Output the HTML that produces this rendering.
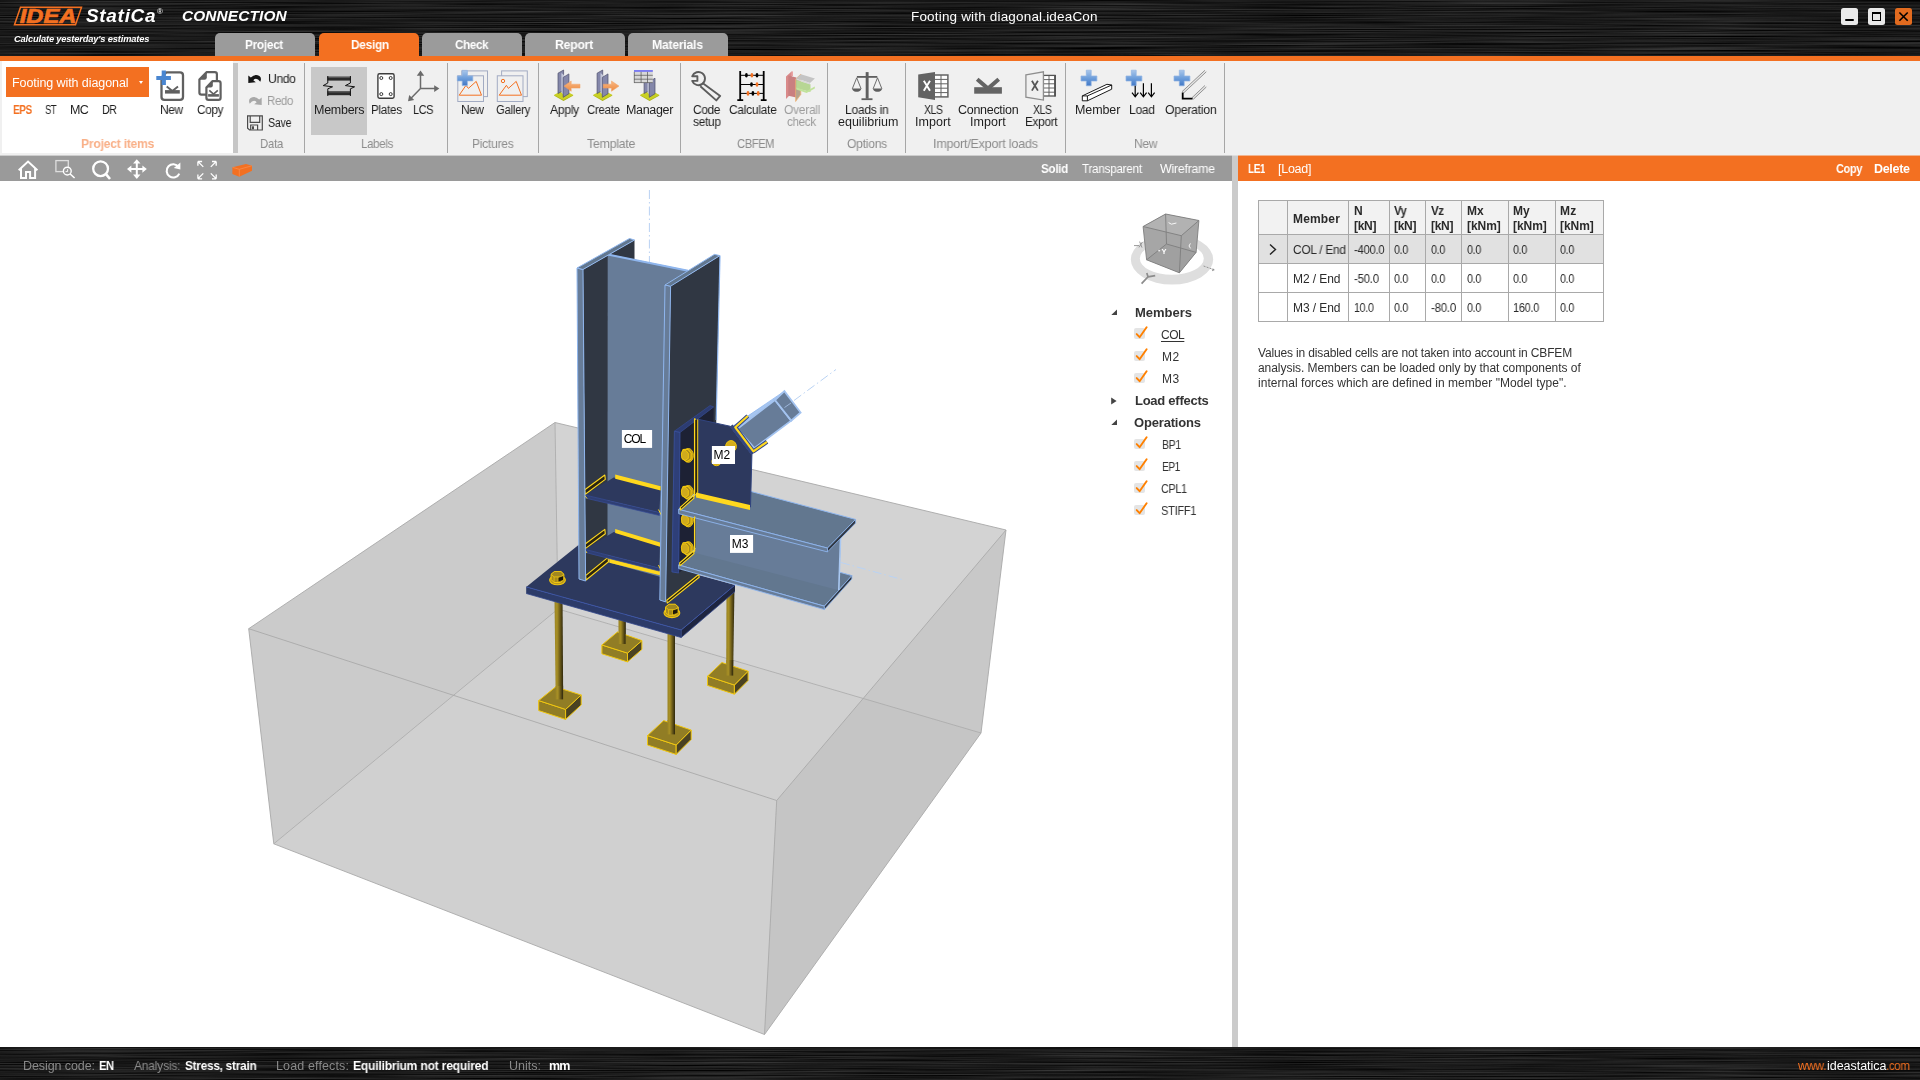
<!DOCTYPE html>
<html lang="en"><head><meta charset="utf-8"><title>IDEA StatiCa Connection</title>
<style>
*{margin:0;padding:0;box-sizing:border-box}
html,body{width:1920px;height:1080px;overflow:hidden;background:#fff}
body{font-family:"Liberation Sans",sans-serif;font-size:12px;color:#1e1e1e;position:relative}
.t{position:absolute;white-space:nowrap;display:block;transform-origin:0 0;will-change:transform}
.abs{position:absolute}
#hdr{left:0;top:0;width:1920px;height:56px}
#oline{left:0;top:56px;width:1920px;height:5px;background:#f37021}
.tab{position:absolute;top:33px;height:23px;width:100px;background:#9b9b9b;border-radius:5px 5px 0 0}
.tab.on{background:#f37021}
#ribbon{left:0;top:61px;width:1920px;height:95px;background:#f0f0f0}
#pitems{left:2px;top:61px;width:231px;height:92px;background:#fff}
.vsep{position:absolute;top:63px;width:1px;height:90px;background:#a6a6a6}
#tbar{left:0;top:156px;width:1232px;height:25px;background:#9a9a9a}
#split{left:1232px;top:156px;width:6px;height:891px;background:#cbcbcb}
#rtitle{left:1238px;top:156px;width:682px;height:25px;background:#f37021}
#ftr{left:0;top:1047px;width:1920px;height:33px}
.wb{position:absolute;top:8px;width:17px;height:17px;background:#e9e9e9;border-radius:2.5px}
</style></head>
<body>
<div id="hdr" class="abs" style="background:#141414"></div>
<svg class="abs" style="left:0;top:0" width="1920" height="56"><defs><filter id="bm" x="0" y="0" width="100%" height="100%" color-interpolation-filters="sRGB"><feTurbulence type="fractalNoise" baseFrequency="0.005 0.85" numOctaves="3" seed="7" result="n"/><feColorMatrix type="matrix" values="0.3 0 0 0 -0.045  0.3 0 0 0 -0.045  0.3 0 0 0 -0.045  0 0 0 0 1"/></filter></defs><rect width="1920" height="56" filter="url(#bm)"/></svg>
<svg class="abs" style="left:10px;top:4px" width="80" height="24" viewBox="10 4 80 24">
<path d="M20.5 7.2 L81.5 7.2 L75.5 24.8 L14.5 24.8 Z" fill="none" stroke="#f37021" stroke-width="1.5"/>
<text x="19.8" y="23.2" font-family="Liberation Sans, sans-serif" font-size="20.2" font-weight="700" font-style="italic" fill="#f37021" stroke="#f37021" stroke-width="0.7" textLength="56.5" lengthAdjust="spacingAndGlyphs">IDEA</text>
</svg>
<span class="t" style="left:85.50px;top:5.00px;font-size:19px;line-height:21px;letter-spacing:0.684px;font-weight:700;font-style:italic;color:#fff;">StatiCa</span>
<span class="t" style="left:157.00px;top:7.00px;font-size:8px;line-height:9px;color:#fff;">®</span>
<span class="t" style="left:182.00px;top:7.00px;font-size:15.4px;line-height:17px;letter-spacing:0.128px;font-weight:700;font-style:italic;color:#fff;">CONNECTION</span>
<span class="t" style="left:13.80px;top:34.00px;font-size:9.3px;line-height:10px;letter-spacing:-0.161px;font-weight:700;font-style:italic;color:#fff;">Calculate yesterday&#x27;s estimates</span>
<span class="t" style="left:910.50px;top:9.00px;font-size:13.5px;line-height:15px;letter-spacing:0.174px;color:#fff;">Footing with diagonal.ideaCon</span>
<div class="wb" style="left:1841px"><div class="abs" style="left:4.3px;top:11.2px;width:8.5px;height:1.7px;background:#000;border-radius:1px"></div></div>
<div class="wb" style="left:1868px"><div class="abs" style="left:4px;top:4.3px;width:9px;height:8.6px;border:1px solid #000;border-top-width:2px"></div></div>
<div class="wb" style="left:1895px;background:#e26b1f"><svg class="abs" style="left:0;top:0" width="17" height="17"><path d="M4.4 4.5 L12.7 12.8 M12.7 4.5 L4.4 12.8" stroke="#000" stroke-width="1.6"/></svg></div>
<div class="tab" style="left:215px"></div>
<span class="t" style="left:245.00px;top:38.00px;font-size:12.6px;line-height:14px;letter-spacing:-0.272px;transform:scaleX(0.9315);font-weight:700;color:#fff;">Project</span>
<div class="tab on" style="left:319px"></div>
<span class="t" style="left:350.50px;top:38.00px;font-size:12.6px;line-height:14px;letter-spacing:-0.306px;transform:scaleX(0.9431);font-weight:700;color:#fff;">Design</span>
<div class="tab" style="left:422px"></div>
<span class="t" style="left:454.50px;top:38.00px;font-size:12.6px;line-height:14px;letter-spacing:-0.367px;transform:scaleX(0.9243);font-weight:700;color:#fff;">Check</span>
<div class="tab" style="left:525px"></div>
<span class="t" style="left:555.00px;top:38.00px;font-size:12.6px;line-height:14px;letter-spacing:-0.296px;transform:scaleX(0.9774);font-weight:700;color:#fff;">Report</span>
<div class="tab" style="left:628px"></div>
<span class="t" style="left:652.00px;top:38.00px;font-size:12.6px;line-height:14px;letter-spacing:-0.246px;transform:scaleX(0.9691);font-weight:700;color:#fff;">Materials</span>
<div id="oline" class="abs"></div>
<div id="ribbon" class="abs"></div>
<div id="pitems" class="abs"></div>
<div class="abs" style="left:233px;top:63px;width:5px;height:90px;background:#c6c6c6"></div>
<div class="abs" style="left:6px;top:67px;width:143px;height:30px;background:#f37021"></div>
<span class="t" style="left:12.00px;top:76.00px;font-size:12.5px;line-height:14px;letter-spacing:-0.078px;color:#fff;">Footing with diagonal</span>
<div class="abs" style="left:139px;top:81px;width:0;height:0;border-left:2.5px solid transparent;border-right:2.5px solid transparent;border-top:3px solid #fff"></div>
<span class="t" style="left:12.50px;top:103.00px;font-size:12.5px;line-height:14px;letter-spacing:-0.536px;transform:scaleX(0.8050);font-weight:700;color:#f37021;">EPS</span>
<span class="t" style="left:45.00px;top:103.00px;font-size:12.5px;line-height:14px;letter-spacing:-0.743px;transform:scaleX(0.7695);color:#1e1e1e;">ST</span>
<span class="t" style="left:69.80px;top:103.00px;font-size:12.5px;line-height:14px;letter-spacing:-0.713px;color:#1e1e1e;">MC</span>
<span class="t" style="left:101.64px;top:103.00px;font-size:12.5px;line-height:14px;letter-spacing:-0.695px;transform:scaleX(0.8572);color:#1e1e1e;">DR</span>
<span class="t" style="left:159.54px;top:103.00px;font-size:12.5px;line-height:14px;letter-spacing:-0.454px;transform:scaleX(0.9638);color:#1e1e1e;">New</span>
<span class="t" style="left:196.80px;top:103.00px;font-size:12.5px;line-height:14px;letter-spacing:-0.370px;transform:scaleX(0.9438);color:#1e1e1e;">Copy</span>
<span class="t" style="left:80.50px;top:136.00px;font-size:13px;line-height:15px;letter-spacing:-0.254px;transform:scaleX(0.9341);font-weight:700;color:#f9b088;">Project items</span>
<span class="t" style="left:267.50px;top:72.00px;font-size:12.5px;line-height:14px;letter-spacing:-0.360px;transform:scaleX(0.9705);color:#1e1e1e;">Undo</span>
<span class="t" style="left:266.58px;top:94.00px;font-size:12.5px;line-height:14px;letter-spacing:-0.368px;transform:scaleX(0.9164);color:#9c9c9c;">Redo</span>
<span class="t" style="left:267.50px;top:116.00px;font-size:12.5px;line-height:14px;letter-spacing:-0.388px;transform:scaleX(0.8584);color:#1e1e1e;">Save</span>
<span class="t" style="left:259.62px;top:136.00px;font-size:13px;line-height:15px;letter-spacing:-0.361px;transform:scaleX(0.8797);color:#8c8c8c;">Data</span>
<div class="abs" style="left:311px;top:67px;width:56px;height:68px;background:#c8c8c8"></div>
<span class="t" style="left:313.50px;top:103.00px;font-size:12.5px;line-height:14px;letter-spacing:-0.274px;color:#1e1e1e;">Members</span>
<span class="t" style="left:370.87px;top:103.00px;font-size:12.5px;line-height:14px;letter-spacing:-0.253px;transform:scaleX(0.9278);color:#1e1e1e;">Plates</span>
<span class="t" style="left:413.42px;top:103.00px;font-size:12.5px;line-height:14px;letter-spacing:-0.457px;transform:scaleX(0.8792);color:#1e1e1e;">LCS</span>
<span class="t" style="left:360.92px;top:136.00px;font-size:13px;line-height:15px;letter-spacing:-0.301px;transform:scaleX(0.8787);color:#8c8c8c;">Labels</span>
<span class="t" style="left:461.04px;top:103.00px;font-size:12.5px;line-height:14px;letter-spacing:-0.457px;transform:scaleX(0.9558);color:#1e1e1e;">New</span>
<span class="t" style="left:495.50px;top:103.00px;font-size:12.5px;line-height:14px;letter-spacing:-0.261px;transform:scaleX(0.9025);color:#1e1e1e;">Gallery</span>
<span class="t" style="left:472.38px;top:136.00px;font-size:13px;line-height:15px;letter-spacing:-0.252px;transform:scaleX(0.9218);color:#8c8c8c;">Pictures</span>
<span class="t" style="left:549.50px;top:103.00px;font-size:12.5px;line-height:14px;letter-spacing:-0.288px;transform:scaleX(0.9720);color:#1e1e1e;">Apply</span>
<span class="t" style="left:587.00px;top:103.00px;font-size:12.5px;line-height:14px;letter-spacing:-0.288px;transform:scaleX(0.9134);color:#1e1e1e;">Create</span>
<span class="t" style="left:625.80px;top:103.00px;font-size:12.5px;line-height:14px;letter-spacing:-0.329px;color:#1e1e1e;">Manager</span>
<span class="t" style="left:586.80px;top:136.00px;font-size:13px;line-height:15px;letter-spacing:-0.276px;transform:scaleX(0.9528);color:#8c8c8c;">Template</span>
<span class="t" style="left:692.50px;top:103.00px;font-size:12.5px;line-height:14px;letter-spacing:-0.366px;transform:scaleX(0.9538);color:#1e1e1e;">Code</span>
<span class="t" style="left:692.50px;top:115.00px;font-size:12.5px;line-height:14px;letter-spacing:-0.282px;transform:scaleX(0.9492);color:#1e1e1e;">setup</span>
<span class="t" style="left:728.80px;top:103.00px;font-size:12.5px;line-height:14px;letter-spacing:-0.239px;transform:scaleX(0.9533);color:#1e1e1e;">Calculate</span>
<span class="t" style="left:783.80px;top:103.00px;font-size:12.5px;line-height:14px;letter-spacing:-0.237px;transform:scaleX(0.9547);color:#9c9c9c;">Overall</span>
<span class="t" style="left:787.00px;top:115.00px;font-size:12.5px;line-height:14px;letter-spacing:-0.316px;transform:scaleX(0.9241);color:#9c9c9c;">check</span>
<span class="t" style="left:736.80px;top:136.00px;font-size:13px;line-height:15px;letter-spacing:-0.454px;transform:scaleX(0.8610);color:#8c8c8c;">CBFEM</span>
<span class="t" style="left:845.34px;top:103.00px;font-size:12.5px;line-height:14px;letter-spacing:-0.241px;transform:scaleX(0.9614);color:#1e1e1e;">Loads in</span>
<span class="t" style="left:837.50px;top:115.00px;font-size:12.5px;line-height:14px;color:#1e1e1e;">equilibrium</span>
<span class="t" style="left:846.80px;top:136.00px;font-size:13px;line-height:15px;letter-spacing:-0.283px;transform:scaleX(0.9334);color:#8c8c8c;">Options</span>
<span class="t" style="left:924.30px;top:103.00px;font-size:12.5px;line-height:14px;letter-spacing:-0.486px;transform:scaleX(0.8379);color:#1e1e1e;">XLS</span>
<span class="t" style="left:914.50px;top:115.00px;font-size:12.5px;line-height:14px;letter-spacing:0.050px;color:#1e1e1e;">Import</span>
<span class="t" style="left:957.50px;top:103.00px;font-size:12.5px;line-height:14px;letter-spacing:-0.287px;color:#1e1e1e;">Connection</span>
<span class="t" style="left:969.50px;top:115.00px;font-size:12.5px;line-height:14px;letter-spacing:0.050px;color:#1e1e1e;">Import</span>
<span class="t" style="left:1032.50px;top:103.00px;font-size:12.5px;line-height:14px;letter-spacing:-0.486px;transform:scaleX(0.8379);color:#1e1e1e;">XLS</span>
<span class="t" style="left:1024.86px;top:115.00px;font-size:12.5px;line-height:14px;letter-spacing:-0.266px;transform:scaleX(0.9381);color:#1e1e1e;">Export</span>
<span class="t" style="left:933.33px;top:136.00px;font-size:13px;line-height:15px;letter-spacing:-0.226px;transform:scaleX(0.9654);color:#8c8c8c;">Import/Export loads</span>
<span class="t" style="left:1074.80px;top:103.00px;font-size:12.5px;line-height:14px;letter-spacing:-0.096px;color:#1e1e1e;">Member</span>
<span class="t" style="left:1128.53px;top:103.00px;font-size:12.5px;line-height:14px;letter-spacing:-0.324px;transform:scaleX(0.9659);color:#1e1e1e;">Load</span>
<span class="t" style="left:1164.50px;top:103.00px;font-size:12.5px;line-height:14px;letter-spacing:-0.246px;transform:scaleX(0.9760);color:#1e1e1e;">Operation</span>
<span class="t" style="left:1133.57px;top:136.00px;font-size:13px;line-height:15px;letter-spacing:-0.481px;transform:scaleX(0.9328);color:#8c8c8c;">New</span>
<div class="vsep" style="left:304px"></div>
<div class="vsep" style="left:447px"></div>
<div class="vsep" style="left:538px"></div>
<div class="vsep" style="left:680px"></div>
<div class="vsep" style="left:827px"></div>
<div class="vsep" style="left:905px"></div>
<div class="vsep" style="left:1065px"></div>
<div class="vsep" style="left:1224px"></div>
<svg class="abs" style="left:0;top:61px" width="1232" height="95" viewBox="0 61 1232 95">
<defs><linearGradient id="plg" x1="0" x2="0" y1="0" y2="1"><stop offset="0" stop-color="#a9c6ea"/><stop offset="0.5" stop-color="#6f9fdb"/><stop offset="1" stop-color="#4178c6"/></linearGradient><linearGradient id="arg" x1="0" x2="0" y1="0" y2="1"><stop offset="0" stop-color="#f8b884"/><stop offset="1" stop-color="#ee8a40"/></linearGradient><pattern id="hat" width="1.4" height="1.4" patternUnits="userSpaceOnUse"><rect width="1.4" height="1.4" fill="#f0f0f0"/><rect width="0.8" height="0.8" fill="#707070"/></pattern></defs>
<path d="M166.5 72.3 H180 Q183 72.3 183 75.3 V97 Q183 99.9 180 99.9 H164.5 Q161.5 99.9 161.5 97 V77.5 Z" fill="#fff" stroke="#606060" stroke-width="2.3" stroke-linejoin="round"/>
<path d="M165 90.1 H179.8 V93.6 H165 Z" fill="#606060"/><path d="M166.7 86.4 L172.4 91 L178 86.4" fill="none" stroke="#606060" stroke-width="1.9"/>
<path d="M161.7 70.4 H165.9 V76.1 H170.9 V79.9 H165.9 V85.0 H161.7 V79.9 H156.3 V76.1 H161.7 Z" fill="#4a86d0"/>
<path d="M206.5 72.2 H214.8 Q216.9 72.2 216.9 74.3 V92.6 Q216.9 94.7 214.8 94.7 H201.5 Q199.4 94.7 199.4 92.6 V79.5 Z" fill="#fff" stroke="#606060" stroke-width="2.2" stroke-linejoin="round"/>
<path d="M206.8 72 V77.5 Q206.8 79.7 204.5 79.7 H199.2 Z" fill="#606060"/>
<path d="M212.6 81.1 H218.5 Q220.6 81.1 220.6 83.2 V97.7 Q220.6 99.8 218.5 99.8 H208.5 Q206.4 99.8 206.4 97.7 V87.5 Z" fill="#fff" stroke="#606060" stroke-width="2.2" stroke-linejoin="round"/>
<path d="M212.8 80.9 V85.6 Q212.8 87.6 210.8 87.6 H206.2 Z" fill="#606060"/>
<path d="M208.1 94.1 H218.9 V96.7 H208.1 Z" fill="#606060"/><path d="M209.3 90.4 L213.5 94.2 L217.8 90.4" fill="none" stroke="#606060" stroke-width="1.6"/>
<path d="M248.3 75.6 L248.3 83 L255.8 82.2 L253.3 80.2 Q256.5 76.8 260.3 81.8 Q262 78 259.4 76 Q255 73.2 250.8 77.6 Z" fill="#151515"/>
<path d="M261.7 97.6 L261.7 105 L254.2 104.2 L256.7 102.2 Q253.5 98.8 249.7 103.8 Q248 100 250.6 98 Q255 95.2 259.2 99.6 Z" fill="#a8a8a8"/>
<path d="M247.6 115.8 H262.3 V130 H249.6 L247.6 128.2 Z" fill="none" stroke="#4a4a4a" stroke-width="1.2"/><path d="M250.2 116 V122.3 H259.7 V116" fill="none" stroke="#4a4a4a" stroke-width="1.2"/><path d="M250.7 130 V125 H257.6 V130" fill="none" stroke="#4a4a4a" stroke-width="1.2"/><rect x="252" y="126.3" width="2" height="3" fill="#4a4a4a"/>
<rect x="327.4" y="76.7" width="23.3" height="3.9" fill="#2b2b2b"/><rect x="327.4" y="76.7" width="23.3" height="1.2" fill="#5a5a5a"/>
<rect x="327.4" y="91.3" width="23.3" height="3.9" fill="#2b2b2b"/><rect x="327.4" y="91.3" width="23.3" height="1.2" fill="#5a5a5a"/>
<path d="M327.8 76 V83 L323.2 85.6 L332.6 86.8 L327.8 88.8 V96" fill="none" stroke="#111" stroke-width="1"/>
<path d="M350.4 76 V83 L345.4 85.6 L354.6 86.8 L350.4 88.8 V96" fill="none" stroke="#111" stroke-width="1"/>
<rect x="377.9" y="73.8" width="16.2" height="24.4" rx="1.6" fill="#fff" stroke="#3c3c3c" stroke-width="1.4"/>
<circle cx="381.3" cy="78.0" r="1.5" fill="none" stroke="#222" stroke-width="0.9"/>
<circle cx="390.7" cy="78.0" r="1.5" fill="none" stroke="#222" stroke-width="0.9"/>
<circle cx="381.3" cy="94.1" r="1.5" fill="none" stroke="#222" stroke-width="0.9"/>
<circle cx="390.7" cy="94.1" r="1.5" fill="none" stroke="#222" stroke-width="0.9"/>
<path d="M420.5 74 V88.6 H435 M420.5 88.6 L411 98.3" fill="none" stroke="#6a6a6a" stroke-width="1.5"/>
<polygon points="420.5,70.5 424.2,75.8 416.8,75.8" fill="#6a6a6a"/><polygon points="439.4,88.6 434.2,92 434.2,85.2" fill="#6a6a6a"/><polygon points="408,101.3 409.2,95.1 414.2,99.9" fill="#6a6a6a"/>
<rect x="461.8" y="70.9" width="25.7" height="25.7" fill="#f0f0f0" stroke="#a2abc2" stroke-width="1"/>
<rect x="457.8" y="75.8" width="25.7" height="25.7" fill="#f0f0f0" stroke="#a2abc2" stroke-width="1"/>
<polygon points="459.2,95.2 466.0,85.3 468.4,88.4 476.2,81.4 481.5,95.2" fill="none" stroke="#f37021" stroke-width="1"/>
<rect x="501.6" y="70.9" width="25.7" height="25.7" fill="#f0f0f0" stroke="#a2abc2" stroke-width="1"/>
<rect x="497.3" y="75.8" width="25.7" height="25.7" fill="#f0f0f0" stroke="#a2abc2" stroke-width="1"/>
<polygon points="499.2,95.2 506.4,85.3 508.4,88.4 516.2,81.4 521.5,95.2" fill="none" stroke="#f37021" stroke-width="1"/>
<circle cx="503" cy="81" r="1.7" fill="none" stroke="#f37021" stroke-width="1"/>
<path d="M462.2 70.4 H467.4 V75.9 H472.8 V80.9 H467.4 V85.6 H462.2 V80.9 H457.3 V75.9 H462.2 Z" fill="url(#plg)" stroke="#8fb3e3" stroke-width="0.7"/>
<polygon points="553.9,95.5 563.5,90.2 573.4,95.5 563.5,101.0" fill="#a9b218"/><polygon points="553.9,94.9 563.5,89.8 573.4,94.9 563.5,100.0" fill="#c9d024"/><polygon points="558.0,73.2 563.6,70.0 563.6,90.3 558.0,93.5" fill="#8487aa" stroke="#4c4e6c" stroke-width="0.7"/><polygon points="561.4,73.0 564.4,75.5 564.4,96.3 561.4,92.3" fill="#c4c8da"/><polygon points="563.2,77.4 568.9,73.9 568.9,93.7 563.2,97.3" fill="#8487aa" stroke="#4c4e6c" stroke-width="0.7"/>
<polygon points="564,86.1 571.2,81 571.2,84.2 580,84.2 580,88.1 571.2,88.1 571.2,91.3" fill="url(#arg)" stroke="#f0a060" stroke-width="0.5"/>
<polygon points="593.0,95.5 602.6,90.2 612.5,95.5 602.6,101.0" fill="#a9b218"/><polygon points="593.0,94.9 602.6,89.8 612.5,94.9 602.6,100.0" fill="#c9d024"/><polygon points="597.1,73.2 602.7,70.0 602.7,90.3 597.1,93.5" fill="#8487aa" stroke="#4c4e6c" stroke-width="0.7"/><polygon points="600.5,73.0 603.5,75.5 603.5,96.3 600.5,92.3" fill="#c4c8da"/><polygon points="602.3,77.4 608.0,73.9 608.0,93.7 602.3,97.3" fill="#8487aa" stroke="#4c4e6c" stroke-width="0.7"/>
<polygon points="619,86.1 611.5,81 611.5,84.2 603.3,84.2 603.3,88.1 611.5,88.1 611.5,91.3" fill="url(#arg)" stroke="#f0a060" stroke-width="0.5"/>
<polygon points="640.0,95.5 649.6,90.2 659.5,95.5 649.6,101.0" fill="#a9b218"/><polygon points="640.0,94.9 649.6,89.8 659.5,94.9 649.6,100.0" fill="#c9d024"/><polygon points="644.1,77.5 649.7,74.3 649.7,90.3 644.1,93.5" fill="#8487aa" stroke="#4c4e6c" stroke-width="0.7"/><polygon points="647.5,77.3 650.5,79.8 650.5,96.3 647.5,92.3" fill="#c4c8da"/><polygon points="649.3,81.7 655.0,78.2 655.0,93.7 649.3,97.3" fill="#8487aa" stroke="#4c4e6c" stroke-width="0.7"/>
<rect x="634" y="70" width="18.8" height="12.8" fill="#d8d8d8"/><rect x="634" y="70" width="18.8" height="1.9" fill="#7c7cf2"/>
<path d="M634 75.3 H652.8 M634 79.2 H652.8 M641.1 71.9 V82.8 M647.5 71.9 V82.8 M634.3 71.9 V82.8 M634 82.6 H652.8" stroke="#555" stroke-width="0.7" fill="none"/>
<g fill="none" stroke="#5c5c5c" stroke-width="1.9" stroke-linejoin="round"><path d="M692.2 76.3 A6.6 6.6 0 1 1 692.2 80.9 H697.4 V76.3 Z" fill="#f0f0f0"/><path d="M703.2 83.4 L720.2 95.9 L716.3 100.4 L700.3 86.3"/></g>
<path d="M740.2 71.1 V100 M763.7 71.1 V100 M737.3 100.2 H743.2 M760.8 100.2 H766.6" stroke="#000" stroke-width="1.8" fill="none"/><path d="M740.2 75.3 H763.7 M740.2 84.5 H763.7 M740.2 93.4 H763.7" stroke="#000" stroke-width="1" fill="none"/>
<ellipse cx="746.4" cy="75.3" rx="1.4" ry="2.3" fill="#000"/>
<ellipse cx="751.9" cy="75.3" rx="1.4" ry="2.3" fill="#f37021"/>
<ellipse cx="757.0" cy="75.3" rx="1.4" ry="2.3" fill="#000"/>
<ellipse cx="751.5" cy="84.5" rx="1.4" ry="2.3" fill="#000"/>
<ellipse cx="757.0" cy="84.5" rx="1.4" ry="2.3" fill="#f37021"/>
<ellipse cx="748.0" cy="93.4" rx="1.4" ry="2.3" fill="#f37021"/>
<ellipse cx="752.9" cy="93.4" rx="1.4" ry="2.3" fill="#000"/>
<ellipse cx="758.2" cy="93.4" rx="1.4" ry="2.3" fill="#f37021"/>
<polygon points="786,76.6 791.8,71.2 791.8,93 786,99" fill="#d98a8a"/><polygon points="788.3,75.5 796.3,77.5 796.3,97.5 788.3,95.8" fill="#c97f80"/><polygon points="791.8,71.2 792.8,71.5 792.8,76 791.8,76" fill="#e89090"/>
<polygon points="795.6,79 800.8,74.2 800.8,94.5 795.6,101.5" fill="#b5a58f" stroke="#f0b070" stroke-width="0.7"/>
<polygon points="796.3,80 810.5,84.2 810.5,92 804,90.3 796.3,88.6" fill="#b7d694"/><polygon points="796.3,87.4 806.6,91 814.8,86.6 814.8,88.6 806.6,93 796.3,89.6" fill="#c1e39b"/>
<polygon points="796.3,78.2 800.9,74.2 814.9,78.4 810,83.1" fill="#c4c4c4"/><polygon points="796.3,78.2 810,83.1 810,84.4 796.3,79.8" fill="#d8d8d8"/>
<rect x="865.7" y="72.1" width="2.9" height="26.6" fill="#5f5f5f"/><rect x="856.9" y="76" width="20.4" height="1.8" fill="#5f5f5f"/><rect x="861.5" y="98.3" width="11" height="1.8" fill="#5f5f5f"/>
<path d="M852.3 88.8 L856.7 77.8 L861.1 88.8" fill="none" stroke="#5f5f5f" stroke-width="0.9"/><path d="M852.1 88.6 H861.3 Q860.5 92.2 856.7 91.7 Q852.9 92.2 852.1 88.6 Z" fill="#5f5f5f"/>
<path d="M873.1 88.8 L877.5 77.8 L881.9 88.8" fill="none" stroke="#5f5f5f" stroke-width="0.9"/><path d="M872.9 88.6 H882.1 Q881.3 92.2 877.5 91.7 Q873.7 92.2 872.9 88.6 Z" fill="#5f5f5f"/>
<rect x="934" y="75" width="13.9" height="21.9" fill="#fff" stroke="#636363" stroke-width="1.5"/>
<path d="M934 79.4 H947.9 M934 83.8 H947.9 M934 88.2 H947.9 M934 92.6 H947.9 M941 75 V96.9" stroke="#636363" stroke-width="1" fill="none"/>
<polygon points="918.2,74.6 935,71.9 935,100 918.2,97.3" fill="#636363"/>
<path d="M923.8 80.8 L930 90.8 M930 80.8 L923.8 90.8" stroke="#fff" stroke-width="1.9" fill="none"/>
<rect x="974.2" y="87.2" width="27.7" height="6.5" fill="#646464"/><path d="M977.2 79.3 L988 88.6 L998.7 79.3" fill="none" stroke="#646464" stroke-width="4"/>
<rect x="1043.4" y="75.4" width="11.6" height="20.6" fill="#fff" stroke="#555" stroke-width="1.3"/><rect x="1054.2" y="75" width="1.8" height="21.4" fill="#555"/>
<path d="M1043 79.6 H1055 M1043 83.8 H1055 M1043 88 H1055 M1043 92.2 H1055 M1049 75.4 V96" stroke="#555" stroke-width="0.9" fill="none"/>
<polygon points="1025.9,74.8 1043.4,71.8 1043.4,100.1 1025.9,97.1" fill="#f0f0f0" stroke="#8e8e8e" stroke-width="1.3"/>
<path d="M1031.9 80.8 L1037.9 90.6 M1037.9 80.8 L1031.9 90.6" stroke="#555" stroke-width="1.8" fill="none"/>
<path d="M1086.3 70.2 H1091.2 V76.0 H1096.9 V81.0 H1091.2 V85.8 H1086.3 V81.0 H1081.0 V76.0 H1086.3 Z" fill="url(#plg)" stroke="#8fb3e3" stroke-width="0.7"/>
<polygon points="1082.3,95.9 1106.9,84.3 1111.7,85 1111.7,89.2 1087.4,100.8 1082.3,100.8" fill="#fff" stroke="#000" stroke-width="0.9" stroke-linejoin="round"/><path d="M1082.3 95.9 H1087.4 V100.8 M1087.4 95.9 L1111.7 85" fill="none" stroke="#000" stroke-width="0.9"/>
<path d="M1131.3 70.2 H1136.2 V76.0 H1141.9 V81.0 H1136.2 V85.8 H1131.3 V81.0 H1126.0 V76.0 H1131.3 Z" fill="url(#plg)" stroke="#8fb3e3" stroke-width="0.7"/>
<path d="M1135.2 85.8 V96.6 M1132.0 92.6 L1135.2 96.8 L1138.4 92.6" fill="none" stroke="#000" stroke-width="1.2"/>
<path d="M1143.4 83.2 V96.6 M1140.2 92.6 L1143.4 96.8 L1146.6 92.6" fill="none" stroke="#000" stroke-width="1.2"/>
<path d="M1151.4 83.2 V96.6 M1148.2 92.6 L1151.4 96.8 L1154.6 92.6" fill="none" stroke="#000" stroke-width="1.2"/>
<path d="M1179.3 70.2 H1184.2 V76.0 H1189.9 V81.0 H1184.2 V85.8 H1179.3 V81.0 H1174.0 V76.0 H1179.3 Z" fill="url(#plg)" stroke="#8fb3e3" stroke-width="0.7"/>
<path d="M1182.7 92.4 L1205.6 71.1" stroke="#e4e4e4" stroke-width="2.4" fill="none"/>
<path d="M1182.0 91.7 L1204.9 70.3 M1183.4 93.2 L1206.3 71.8" stroke="#707070" stroke-width="0.7" fill="none"/>
<path d="M1192.6 98.6 L1205.6 86.3" stroke="#e4e4e4" stroke-width="2.4" fill="none"/>
<path d="M1191.9 97.8 L1204.9 85.5 M1193.3 99.3 L1206.3 87.0" stroke="#707070" stroke-width="0.7" fill="none"/>
<path d="M1182.7 92.6 V98.6 H1192.6" fill="none" stroke="#000" stroke-width="1.8"/>
</svg>
<div id="tbar" class="abs"></div>
<div class="abs" style="left:0;top:155px;width:1232px;height:1px;background:#cdcdcd"></div><div class="abs" style="left:1232px;top:155px;width:6px;height:1px;background:#dedede"></div><div class="abs" style="left:1238px;top:155px;width:682px;height:1px;background:#f2b48f"></div>
<div id="split" class="abs"></div>
<div id="rtitle" class="abs"></div>
<span class="t" style="left:1040.80px;top:162.00px;font-size:12.5px;line-height:14px;letter-spacing:-0.282px;transform:scaleX(0.9274);font-weight:700;color:#fff;">Solid</span>
<span class="t" style="left:1082.00px;top:162.00px;font-size:12.5px;line-height:14px;letter-spacing:-0.253px;transform:scaleX(0.9319);color:#fff;">Transparent</span>
<span class="t" style="left:1160.00px;top:162.00px;font-size:12.5px;line-height:14px;letter-spacing:-0.255px;transform:scaleX(0.9884);color:#fff;">Wireframe</span>
<span class="t" style="left:1248.30px;top:162.00px;font-size:12.5px;line-height:14px;letter-spacing:-0.507px;transform:scaleX(0.7924);font-weight:700;color:#fff;">LE1</span>
<span class="t" style="left:1277.50px;top:162.00px;font-size:12.5px;line-height:14px;letter-spacing:-0.256px;color:#fff;">[Load]</span>
<span class="t" style="left:1836.00px;top:162.00px;font-size:12.5px;line-height:14px;letter-spacing:-0.414px;transform:scaleX(0.8817);font-weight:700;color:#fff;">Copy</span>
<span class="t" style="left:1874.00px;top:162.00px;font-size:12.5px;line-height:14px;letter-spacing:-0.313px;font-weight:700;color:#fff;">Delete</span>
<svg class="abs" style="left:0;top:156px" width="300" height="25" viewBox="0 156 300 25">
<path d="M18.7 170.2 L28.05 161.5 L37.4 170.2 M21 168.8 V178.1 H26 V172 H30.1 V178.1 H35.1 V168.8" fill="none" stroke="#fff" stroke-width="2" stroke-linejoin="miter"/>
<rect x="55.9" y="160.6" width="12.4" height="11" fill="none" stroke="#dedede" stroke-width="1.3"/><circle cx="67.3" cy="171.1" r="3.9" fill="#9a9a9a" stroke="#fff" stroke-width="1.4"/><path d="M70.2 174 L74.6 178" stroke="#fff" stroke-width="1.6"/><path d="M67.6 169.2 V171.6 H65.6" stroke="#fff" stroke-width="0.9" fill="none"/>
<circle cx="100.6" cy="168.7" r="7.4" fill="none" stroke="#fff" stroke-width="2.3"/><path d="M106 174.2 L110 179" stroke="#fff" stroke-width="2.6"/>
<path d="M130 169.1 H144 M136.8 162 V176" stroke="#fff" stroke-width="2" fill="none"/>
<polygon points="127,169.1 131.4,165.4 131.4,172.8" fill="#fff"/><polygon points="146.8,169.1 142.4,165.4 142.4,172.8" fill="#fff"/><polygon points="136.8,159.2 133.1,163.6 140.5,163.6" fill="#fff"/><polygon points="136.8,179 133.1,174.6 140.5,174.6" fill="#fff"/>
<path d="M178.6 167 A6.6 6.6 0 1 0 179.3 173.6" fill="none" stroke="#fff" stroke-width="2.1"/><polygon points="180.4,162.6 180.4,169.6 173.8,168" fill="#fff"/>
<path d="M197.9 161.5 H202.1 M197.9 161.5 V165.7 M198.3 161.9 L203.3 166.9" stroke="#fff" stroke-width="1.3" fill="none"/>
<path d="M216.2 161.5 H212.0 M216.2 161.5 V165.7 M215.8 161.9 L210.8 166.9" stroke="#fff" stroke-width="1.3" fill="none"/>
<path d="M197.9 178.8 H202.1 M197.9 178.8 V174.6 M198.3 178.4 L203.3 173.4" stroke="#fff" stroke-width="1.3" fill="none"/>
<path d="M216.2 178.8 H212.0 M216.2 178.8 V174.6 M215.8 178.4 L210.8 173.4" stroke="#fff" stroke-width="1.3" fill="none"/>
<polygon points="232.4,167.3 246,164 252,165.7 252,170.7 239.3,176.8 232.4,174" fill="#f37021"/><path d="M232.6 167.4 L239.3 169.3 L251.8 165.8 M239.3 169.3 V176.6" stroke="#f68d4e" stroke-width="0.8" fill="none"/>
</svg>
<svg class="abs" style="left:0;top:181px" width="1232" height="866" viewBox="0 181 1232 866">
<defs><linearGradient id="rodg" x1="0" x2="1" y1="0" y2="0"><stop offset="0" stop-color="#9a8423"/><stop offset="0.3" stop-color="#a89026"/><stop offset="0.62" stop-color="#6e5d1a"/><stop offset="1" stop-color="#2e270c"/></linearGradient></defs>
<polygon points="555.0,422.5 558.0,609.0 273.8,843.8 248.7,628.7" fill="rgb(112,112,112)" fill-opacity="0.25"/>
<polygon points="555.0,422.5 1006.0,530.0 981.0,733.0 558.0,609.0" fill="rgb(154,154,154)" fill-opacity="0.25"/>
<polygon points="558.0,609.0 981.0,733.0 764.5,1034.5 273.8,843.8" fill="rgb(138,138,138)" fill-opacity="0.25"/>
<polygon points="555.0,422.5 1006.0,530.0 776.7,800.5 248.7,628.7" fill="rgb(154,154,154)" fill-opacity="0.25"/>
<polygon points="248.7,628.7 776.7,800.5 764.5,1034.5 273.8,843.8" fill="rgb(154,154,154)" fill-opacity="0.25"/>
<polygon points="776.7,800.5 1006.0,530.0 981.0,733.0 764.5,1034.5" fill="rgb(112,112,112)" fill-opacity="0.25"/>
<polyline points="555.0,422.5 558.0,609.0" fill="none" stroke="#a9a9a9" stroke-width="0.8"/>
<polyline points="273.8,843.8 558.0,609.0 981.0,733.0" fill="none" stroke="#a9a9a9" stroke-width="0.8"/>
<polyline points="555.0,422.5 1006.0,530.0 776.7,800.5 248.7,628.7 555.0,422.5" fill="none" stroke="#a9a9a9" stroke-width="0.9"/>
<polyline points="248.7,628.7 273.8,843.8 764.5,1034.5 981.0,733.0 1006.0,530.0" fill="none" stroke="#a9a9a9" stroke-width="0.9"/>
<polyline points="776.7,800.5 764.5,1034.5" fill="none" stroke="#a9a9a9" stroke-width="0.9"/>
<polyline points="649.4,190.0 649.4,262.0" fill="none" stroke="#b9d2f3" stroke-width="1" stroke-dasharray="9 3 1.5 3"/>
<polyline points="794.0,400.5 836.0,369.5" fill="none" stroke="#b9d2f3" stroke-width="1" stroke-dasharray="9 3 1.5 3"/>
<polyline points="841.0,562.5 902.0,579.5" fill="none" stroke="#b9d2f3" stroke-width="1" stroke-dasharray="9 3 1.5 3"/>
<polygon points="618.7,600.0 625.6,600.0 625.6,644.0 618.7,644.0" fill="url(#rodg)"/>
<polygon points="601.9,645.0 627.5,653.1 627.5,661.9 601.9,653.8" fill="#917d25" stroke="#f0c60f" stroke-width="1"/>
<polygon points="627.5,653.1 641.9,640.6 641.9,649.4 627.5,661.9" fill="#4a4222" stroke="#f0c60f" stroke-width="1"/>
<polygon points="601.9,645.0 617.5,631.9 641.9,640.6 627.5,653.1" fill="#917d25" stroke="#f0c60f" stroke-width="1"/>
<polygon points="618.7,620.0 625.6,620.0 625.6,644.0 618.7,644.0" fill="url(#rodg)"/>
<polygon points="726.5,585.0 734.5,585.0 733.1,675.6 726.2,675.6" fill="url(#rodg)"/>
<polygon points="707.5,676.2 734.4,685.0 734.4,694.2 707.5,685.4" fill="#917d25" stroke="#f0c60f" stroke-width="1"/>
<polygon points="734.4,685.0 748.1,671.2 748.1,680.4 734.4,694.2" fill="#4a4222" stroke="#f0c60f" stroke-width="1"/>
<polygon points="707.5,676.2 721.9,662.5 748.1,671.2 734.4,685.0" fill="#917d25" stroke="#f0c60f" stroke-width="1"/>
<polygon points="726.3,660.0 733.2,660.0 733.2,675.6 726.3,675.6" fill="url(#rodg)"/>
<polygon points="554.4,592.0 562.5,592.0 563.2,699.4 555.7,699.4" fill="url(#rodg)"/>
<polygon points="538.7,700.6 565.6,709.4 565.6,719.4 538.7,710.6" fill="#917d25" stroke="#f0c60f" stroke-width="1"/>
<polygon points="565.6,709.4 581.2,695.0 581.2,705.0 565.6,719.4" fill="#4a4222" stroke="#f0c60f" stroke-width="1"/>
<polygon points="538.7,700.6 555.6,686.9 581.2,695.0 565.6,709.4" fill="#917d25" stroke="#f0c60f" stroke-width="1"/>
<polygon points="555.6,686.0 563.1,686.0 563.1,699.4 555.6,699.4" fill="url(#rodg)"/>
<polygon points="667.5,632.0 675.0,632.0 675.0,734.4 667.5,734.4" fill="url(#rodg)"/>
<polygon points="647.5,735.6 676.2,745.0 676.2,754.4 647.5,745.0" fill="#917d25" stroke="#f0c60f" stroke-width="1"/>
<polygon points="676.2,745.0 691.2,730.0 691.2,739.4 676.2,754.4" fill="#4a4222" stroke="#f0c60f" stroke-width="1"/>
<polygon points="647.5,735.6 663.7,720.6 691.2,730.0 676.2,745.0" fill="#917d25" stroke="#f0c60f" stroke-width="1"/>
<polygon points="667.5,720.0 675.0,720.0 675.0,734.4 667.5,734.4" fill="url(#rodg)"/>
<polygon points="526.2,586.9 681.2,630.0 681.2,637.5 526.2,593.5" fill="#2c3b69"/>
<polygon points="681.2,630.0 735.0,585.0 735.0,591.5 681.2,637.5" fill="#1e2540"/>
<polygon points="526.2,586.9 581.0,543.0 735.0,585.0 681.2,630.0" fill="#2d395e"/>
<polyline points="526.2,586.9 681.2,630.0 735.0,585.0" fill="none" stroke="#3a53a4" stroke-width="1"/>
<polyline points="526.2,593.5 681.2,637.5 735.0,591.5" fill="none" stroke="#33488c" stroke-width="0.8"/>
<polyline points="681.2,630.0 681.2,637.5" fill="none" stroke="#33488c" stroke-width="0.8"/>
<ellipse cx="557.5" cy="580.1" rx="7.9" ry="4.7" fill="#b8971c" stroke="#f0c60f" stroke-width="1.1"/>
<polygon points="551.1,574.3 554.5,571.5 560.9,571.5 563.9,574.3 563.9,579.5 560.5,582.5 554.1,582.5 551.1,579.5" fill="#a68b1e" stroke="#f0c60f" stroke-width="1"/>
<polygon points="551.1,574.3 554.5,571.5 560.9,571.5 563.9,574.3 560.5,576.9 554.1,576.9" fill="#a08720" stroke="#f0c60f" stroke-width="0.8"/>
<polyline points="554.1,576.9 554.1,582.5" fill="none" stroke="#f0c60f" stroke-width="0.7"/>
<polyline points="558.1,577.0 558.1,582.5" fill="none" stroke="#f0c60f" stroke-width="0.7"/>
<polygon points="558.5,577.7 563.1,576.3 563.1,580.1 558.5,581.5" fill="#1d190a"/>
<polygon points="583.0,269.5 634.5,240.0 634.5,300.0 608.0,300.0 608.6,561.0 585.6,581.0" fill="#303743"/>
<polygon points="607.7,254.0 689.0,270.4 689.0,585.0 607.5,562.0" fill="#677c98"/>
<polyline points="607.7,254.5 688.0,270.8" fill="none" stroke="#8fb6ee" stroke-width="2"/>
<polygon points="609.4,557.8 660.0,570.3 660.0,575.3 609.4,562.8" fill="#ffd81e"/>
<polygon points="585.6,575.6 608.0,557.4 608.5,561.8 586.1,580.0" fill="#2a2410" stroke="#ffd81e" stroke-width="1.1" stroke-linejoin="round"/>
<polygon points="585.0,495.0 613.7,477.5 660.6,487.5 659.4,512.5" fill="#2d395e"/>
<polygon points="585.0,495.0 659.4,512.5 659.4,515.5 585.0,498.0" fill="#2f3f74" stroke="#364c96" stroke-width="0.7"/>
<polygon points="615.2,474.5 660.6,486.3 660.6,490.5 615.2,478.7" fill="#ffd81e"/>
<polygon points="584.8,489.8 604.8,475.0 605.3,479.4 585.3,494.2" fill="#2a2410" stroke="#ffd81e" stroke-width="1.1" stroke-linejoin="round"/>
<polyline points="583.5,494.0 587.0,498.5" fill="none" stroke="#ffd81e" stroke-width="1"/>
<polyline points="658.4,509.5 661.9,516.0" fill="none" stroke="#ffd81e" stroke-width="1"/>
<polygon points="585.0,549.4 613.7,531.9 660.0,543.7 659.4,568.1" fill="#2d395e"/>
<polygon points="585.0,549.4 659.4,568.1 659.4,571.1 585.0,552.4" fill="#2f3f74" stroke="#364c96" stroke-width="0.7"/>
<polygon points="615.2,528.9 660.0,542.5 660.0,546.7 615.2,533.1" fill="#ffd81e"/>
<polygon points="584.8,544.2 604.8,529.4 605.3,533.8 585.3,548.6" fill="#2a2410" stroke="#ffd81e" stroke-width="1.1" stroke-linejoin="round"/>
<polyline points="583.5,548.4 587.0,552.9" fill="none" stroke="#ffd81e" stroke-width="1"/>
<polyline points="658.4,565.1 661.9,571.6" fill="none" stroke="#ffd81e" stroke-width="1"/>
<polygon points="577.0,268.0 583.0,269.5 585.6,581.0 579.0,579.0" fill="#677c98" stroke="#8fb6ee" stroke-width="1"/>
<polygon points="577.0,268.0 629.5,238.5 634.5,240.0 583.0,269.5" fill="#62778f" stroke="#8fb6ee" stroke-width="1"/>
<polygon points="670.6,286.2 720.0,255.6 713.0,563.5 665.6,601.9" fill="#303743"/>
<polyline points="720.0,255.6 716.2,420.0" fill="none" stroke="#8fb6ee" stroke-width="1.2"/>
<polygon points="666.8,600.3 698.7,574.5 699.2,577.3 667.3,603.1" fill="#2a2410" stroke="#ffd81e" stroke-width="1.1" stroke-linejoin="round"/>
<polygon points="665.0,285.0 670.6,286.2 665.6,601.9 659.8,600.0" fill="#677c98" stroke="#8fb6ee" stroke-width="1"/>
<polygon points="665.0,285.0 714.4,254.4 720.0,255.6 670.6,286.2" fill="#62778f" stroke="#8fb6ee" stroke-width="1"/>
<ellipse cx="671.9" cy="612.9" rx="7.9" ry="4.7" fill="#b8971c" stroke="#f0c60f" stroke-width="1.1"/>
<polygon points="665.5,607.1 668.9,604.3 675.3,604.3 678.3,607.1 678.3,612.3 674.9,615.3 668.5,615.3 665.5,612.3" fill="#a68b1e" stroke="#f0c60f" stroke-width="1"/>
<polygon points="665.5,607.1 668.9,604.3 675.3,604.3 678.3,607.1 674.9,609.7 668.5,609.7" fill="#a08720" stroke="#f0c60f" stroke-width="0.8"/>
<polyline points="668.5,609.7 668.5,615.3" fill="none" stroke="#f0c60f" stroke-width="0.7"/>
<polyline points="672.5,609.8 672.5,615.3" fill="none" stroke="#f0c60f" stroke-width="0.7"/>
<polygon points="672.9,610.5 677.5,609.1 677.5,612.9 672.9,614.3" fill="#1d190a"/>
<polygon points="680.0,432.5 713.7,406.9 711.5,545.0 678.7,573.0" fill="#1d2134"/>
<polygon points="674.4,431.2 710.0,405.6 713.7,406.9 680.0,432.5" fill="#2c3c72" stroke="#33488a" stroke-width="0.8"/>
<polygon points="674.4,431.2 680.0,432.5 678.7,573.0 671.9,571.9" fill="#2e3f78" stroke="#3a52a0" stroke-width="0.8"/>
<ellipse cx="688.4" cy="455.4" rx="4.9" ry="6.9" fill="#b8961c" stroke="#f0c60f" stroke-width="1"/>
<polygon points="683.0,449.6 687.8,449.1 691.2,453.0 691.0,459.0 686.8,461.7 682.4,458.9 681.8,453.6" fill="#a98a1c" stroke="#f0c60f" stroke-width="1.1" stroke-linejoin="round"/>
<polygon points="682.3,450.9 685.9,450.5 688.4,453.6 688.3,458.4 685.1,460.5 681.9,458.3 681.4,454.1" fill="#d0aa1c" stroke="#f0c60f" stroke-width="0.9" stroke-linejoin="round"/>
<ellipse cx="688.4" cy="492.4" rx="4.9" ry="6.9" fill="#b8961c" stroke="#f0c60f" stroke-width="1"/>
<polygon points="683.0,486.6 687.8,486.1 691.2,490.0 691.0,496.0 686.8,498.7 682.4,495.9 681.8,490.6" fill="#a98a1c" stroke="#f0c60f" stroke-width="1.1" stroke-linejoin="round"/>
<polygon points="682.3,487.9 685.9,487.5 688.4,490.6 688.3,495.4 685.1,497.5 681.9,495.3 681.4,491.1" fill="#d0aa1c" stroke="#f0c60f" stroke-width="0.9" stroke-linejoin="round"/>
<ellipse cx="688.4" cy="520.0" rx="4.9" ry="6.9" fill="#b8961c" stroke="#f0c60f" stroke-width="1"/>
<polygon points="683.0,514.2 687.8,513.7 691.2,517.6 691.0,523.6 686.8,526.3 682.4,523.5 681.8,518.2" fill="#a98a1c" stroke="#f0c60f" stroke-width="1.1" stroke-linejoin="round"/>
<polygon points="682.3,515.5 685.9,515.1 688.4,518.2 688.3,523.0 685.1,525.1 681.9,522.9 681.4,518.7" fill="#d0aa1c" stroke="#f0c60f" stroke-width="0.9" stroke-linejoin="round"/>
<ellipse cx="688.4" cy="548.6" rx="4.9" ry="6.9" fill="#b8961c" stroke="#f0c60f" stroke-width="1"/>
<polygon points="683.0,542.8 687.8,542.3 691.2,546.2 691.0,552.2 686.8,554.9 682.4,552.1 681.8,546.8" fill="#a98a1c" stroke="#f0c60f" stroke-width="1.1" stroke-linejoin="round"/>
<polygon points="682.3,544.1 685.9,543.7 688.4,546.8 688.3,551.6 685.1,553.7 681.9,551.5 681.4,547.3" fill="#d0aa1c" stroke="#f0c60f" stroke-width="0.9" stroke-linejoin="round"/>
<polygon points="678.7,565.0 708.0,536.0 851.9,575.6 824.4,606.2" fill="#62778f" stroke="#8fb6ee" stroke-width="1"/>
<polygon points="678.7,565.0 824.4,606.2 824.4,609.6 678.7,568.6" fill="#677c98" stroke="#8fb6ee" stroke-width="0.9"/>
<polygon points="824.4,606.2 851.9,575.6 851.9,579.0 824.4,609.6" fill="#303743" stroke="#8fb6ee" stroke-width="0.8"/>
<polygon points="695.5,514.0 840.8,536.0 838.9,590.3 695.5,553.0" fill="#677c98"/>
<polyline points="840.6,536.0 838.8,590.0" fill="none" stroke="#a9c8f2" stroke-width="1.6"/>
<polygon points="678.7,509.4 708.0,480.0 855.6,519.4 827.5,548.1" fill="#62778f" stroke="#8fb6ee" stroke-width="1"/>
<polygon points="678.7,509.4 827.5,548.1 827.5,551.9 678.7,513.7" fill="#677c98" stroke="#8fb6ee" stroke-width="0.9"/>
<polygon points="827.5,548.1 855.6,519.4 855.6,523.1 827.5,551.9" fill="#303743" stroke="#8fb6ee" stroke-width="0.8"/>
<polyline points="680.5,508.0 694.6,495.5 694.6,418.5" fill="none" stroke="#ffd81e" stroke-width="1.3"/>
<polyline points="680.0,563.5 694.6,551.0 694.6,516.5" fill="none" stroke="#ffd81e" stroke-width="1.3"/>
<polygon points="680.2,507.3 693.5,495.5 694.0,498.1 680.7,509.9" fill="#2a2410" stroke="#ffd81e" stroke-width="1.1" stroke-linejoin="round"/>
<polygon points="679.6,563.0 693.5,551.0 694.0,553.6 680.1,565.6" fill="#2a2410" stroke="#ffd81e" stroke-width="1.1" stroke-linejoin="round"/>
<polygon points="698.2,419.3 730.0,426.2 751.9,455.0 750.5,507.0 696.0,494.5" fill="#2d395e" stroke="#31447f" stroke-width="1"/>
<polygon points="729.6,426.6 732.9,424.6 753.6,452.6 751.9,455.6" fill="#35477e"/>
<polyline points="694.9,418.6 694.9,495.0" fill="none" stroke="#ffd81e" stroke-width="1.4"/>
<polyline points="697.6,419.5 697.6,495.0" fill="none" stroke="#ffd81e" stroke-width="1.2"/>
<polygon points="695.3,420.0 697.2,420.0 697.2,494.0 695.3,494.0" fill="#2a2410"/>
<polygon points="696.0,492.6 750.0,505.0 750.0,510.0 696.0,497.6" fill="#ffd81e"/>
<ellipse cx="731" cy="446.4" rx="5.4" ry="5.8" fill="#d5ae1b" stroke="#f0c60f"/><ellipse cx="716.5" cy="461.5" rx="4.6" ry="4.2" fill="#d5ae1b" stroke="#f0c60f"/>
<polygon points="733.7,425.6 784.4,391.2 775.0,400.0 737.5,428.7" fill="#a7c6f0" stroke="#8fb6ee" stroke-width="0.8"/>
<polygon points="737.5,428.7 775.0,400.0 791.2,420.6 754.4,448.1" fill="#677c98" stroke="#a3c3f0" stroke-width="1.7"/>
<polygon points="775.0,400.0 784.4,391.2 800.6,412.5 791.2,420.6" fill="#677c98" stroke="#a3c3f0" stroke-width="1.8"/>
<polyline points="784.5,407.5 791.0,403.0" fill="none" stroke="#a9c4ea" stroke-width="0.8"/>
<polyline points="747.8,416.0 735.3,427.3 753.4,451.4 767.0,441.8" fill="none" stroke="#33488a" stroke-width="4.2" stroke-linejoin="round"/>
<polyline points="747.8,416.0 735.3,427.3 753.4,451.4 767.0,441.8" fill="none" stroke="#ffd81e" stroke-width="2.2" stroke-linejoin="round"/>
<rect x="621.9" y="430" width="30.2" height="17.9" fill="#fff"/><text x="623.7" y="442.9" font-family="Liberation Sans, sans-serif" font-size="12" fill="#000" textLength="22.4">COL</text>
<rect x="711.9" y="446" width="23.1" height="18" fill="#fff"/><text x="713.6" y="458.6" font-family="Liberation Sans, sans-serif" font-size="12" fill="#000" textLength="16.6">M2</text>
<rect x="730" y="535" width="23.1" height="17.9" fill="#fff"/><text x="731.8" y="547.5" font-family="Liberation Sans, sans-serif" font-size="12" fill="#000" textLength="16.6">M3</text>
<path d="M1130.8 259.5 A41.2 25 0 1 0 1213.2 259.5 A41.2 25 0 1 0 1130.8 259.5 Z M1139.8 258.5 A32 16.2 0 1 1 1203.8 258.5 A32 16.2 0 1 1 1139.8 258.5 Z" fill="#dedede" fill-rule="evenodd"/>
<polygon points="1143.1,226.5 1165.6,214.0 1198.9,220.5 1196.1,252.4 1179.4,272.8 1146.6,259.8" fill="#a6a6a6"/>
<polygon points="1165.6,214.0 1198.9,220.5 1181.3,235.7 1143.1,226.5" fill="#b2b2b2"/>
<polygon points="1166.5,244.0 1196.1,252.4 1179.4,272.8 1146.6,259.8" fill="#a0a0a0"/>
<path d="M1165.6 214.0 L1198.9 220.5 L1181.3 235.7 L1143.1 226.5 Z M1166.5 244.0 L1196.1 252.4 L1179.4 272.8 L1146.6 259.8 Z" fill="none" stroke="#7e7e7e" stroke-width="0.9"/>
<path d="M1165.6 214.0 L1166.5 244.0" stroke="#7e7e7e" stroke-width="0.9"/>
<path d="M1198.9 220.5 L1196.1 252.4" stroke="#7e7e7e" stroke-width="0.9"/>
<path d="M1181.3 235.7 L1179.4 272.8" stroke="#7e7e7e" stroke-width="0.9"/>
<path d="M1143.1 226.5 L1146.6 259.8" stroke="#7e7e7e" stroke-width="0.9"/>
<path d="M1141.6 283.6 L1148 276.8 L1146.8 273 M1148 276.8 L1155.2 275.6" stroke="#8c8c8c" stroke-width="1.7" fill="none"/>
<path d="M1134 245.6 H1139 M1139.6 241.6 L1142 247.6 M1142.4 242 L1139 247.4" stroke="#8c8c8c" stroke-width="0.9" fill="none"/>
<path d="M1203.6 266 L1213 269.4" stroke="#8c8c8c" stroke-width="0.9" stroke-dasharray="2 1.2" fill="none"/><polygon points="1214.8,270 1212,271.2 1212.8,268.2" fill="#8c8c8c"/>
<text x="1161.6" y="254" font-family="Liberation Sans, sans-serif" font-size="7.5" font-weight="700" fill="#fff">Y</text>
<path d="M1159.2 249.6 V251.6 M1158.2 250.6 H1160.2" stroke="#fff" stroke-width="0.7"/>
<path d="M1168.6 222.6 L1171.4 224.2 L1176.4 223" stroke="#fff" stroke-width="0.9" fill="none"/>
<path d="M1190.4 243.4 L1189 246 L1190.6 248.4" stroke="#fff" stroke-width="0.9" fill="none"/>
</svg>
<svg class="abs" style="left:1110px;top:308px" width="9" height="9"><path d="M7 1.5 L7 7 L1.3 7 Z" fill="#444"/></svg>
<span class="t" style="left:1134.60px;top:305.00px;font-size:13px;line-height:15px;letter-spacing:-0.008px;font-weight:700;color:#333;">Members</span>
<div class="abs" style="left:1134px;top:328.3px;width:11px;height:10.5px;background:#e4e4e4;border-radius:2px"></div><svg class="abs" style="left:1134px;top:325.8px" width="16" height="14"><path d="M2.7 8.1 L5.6 11.2 L12.6 1.2" fill="none" stroke="#ff8000" stroke-width="1.9" stroke-linecap="round" stroke-linejoin="round"/></svg>
<span class="t" style="left:1161.20px;top:328.00px;font-size:12px;line-height:14px;letter-spacing:-0.445px;transform:scaleX(0.9830);color:#333;text-decoration:underline;text-underline-offset:1.5px;">COL</span>
<div class="abs" style="left:1134px;top:350.6px;width:11px;height:10.5px;background:#e4e4e4;border-radius:2px"></div><svg class="abs" style="left:1134px;top:348.1px" width="16" height="14"><path d="M2.7 8.1 L5.6 11.2 L12.6 1.2" fill="none" stroke="#ff8000" stroke-width="1.9" stroke-linecap="round" stroke-linejoin="round"/></svg>
<span class="t" style="left:1161.80px;top:350.00px;font-size:12px;line-height:14px;letter-spacing:0.504px;color:#333;">M2</span>
<div class="abs" style="left:1134px;top:372.6px;width:11px;height:10.5px;background:#e4e4e4;border-radius:2px"></div><svg class="abs" style="left:1134px;top:370.1px" width="16" height="14"><path d="M2.7 8.1 L5.6 11.2 L12.6 1.2" fill="none" stroke="#ff8000" stroke-width="1.9" stroke-linecap="round" stroke-linejoin="round"/></svg>
<span class="t" style="left:1161.80px;top:372.00px;font-size:12px;line-height:14px;letter-spacing:0.504px;color:#333;">M3</span>
<svg class="abs" style="left:1110px;top:396px" width="9" height="10"><path d="M1.2 1.5 L6.6 5 L1.2 8.5 Z" fill="#444"/></svg>
<span class="t" style="left:1134.60px;top:393.00px;font-size:13px;line-height:15px;letter-spacing:-0.258px;font-weight:700;color:#333;">Load effects</span>
<svg class="abs" style="left:1110px;top:418px" width="9" height="9"><path d="M7 1.5 L7 7 L1.3 7 Z" fill="#444"/></svg>
<span class="t" style="left:1134.10px;top:415.00px;font-size:13px;line-height:15px;letter-spacing:-0.177px;font-weight:700;color:#333;">Operations</span>
<div class="abs" style="left:1134px;top:438.6px;width:11px;height:10.5px;background:#e4e4e4;border-radius:2px"></div><svg class="abs" style="left:1134px;top:436.1px" width="16" height="14"><path d="M2.7 8.1 L5.6 11.2 L12.6 1.2" fill="none" stroke="#ff8000" stroke-width="1.9" stroke-linecap="round" stroke-linejoin="round"/></svg>
<span class="t" style="left:1161.90px;top:438.00px;font-size:12px;line-height:14px;letter-spacing:-0.456px;transform:scaleX(0.8825);color:#333;">BP1</span>
<div class="abs" style="left:1134px;top:460.6px;width:11px;height:10.5px;background:#e4e4e4;border-radius:2px"></div><svg class="abs" style="left:1134px;top:458.1px" width="16" height="14"><path d="M2.7 8.1 L5.6 11.2 L12.6 1.2" fill="none" stroke="#ff8000" stroke-width="1.9" stroke-linecap="round" stroke-linejoin="round"/></svg>
<span class="t" style="left:1161.90px;top:460.00px;font-size:12px;line-height:14px;letter-spacing:-0.477px;transform:scaleX(0.8434);color:#333;">EP1</span>
<div class="abs" style="left:1134px;top:482.6px;width:11px;height:10.5px;background:#e4e4e4;border-radius:2px"></div><svg class="abs" style="left:1134px;top:480.1px" width="16" height="14"><path d="M2.7 8.1 L5.6 11.2 L12.6 1.2" fill="none" stroke="#ff8000" stroke-width="1.9" stroke-linecap="round" stroke-linejoin="round"/></svg>
<span class="t" style="left:1161.40px;top:482.00px;font-size:12px;line-height:14px;letter-spacing:-0.393px;transform:scaleX(0.9017);color:#333;">CPL1</span>
<div class="abs" style="left:1134px;top:504.6px;width:11px;height:10.5px;background:#e4e4e4;border-radius:2px"></div><svg class="abs" style="left:1134px;top:502.1px" width="16" height="14"><path d="M2.7 8.1 L5.6 11.2 L12.6 1.2" fill="none" stroke="#ff8000" stroke-width="1.9" stroke-linecap="round" stroke-linejoin="round"/></svg>
<span class="t" style="left:1161.40px;top:504.00px;font-size:12px;line-height:14px;letter-spacing:-0.306px;transform:scaleX(0.9227);color:#333;">STIFF1</span>
<div class="abs" style="left:1258px;top:200px;width:345px;height:34px;background:#f2f2f2"></div>
<div class="abs" style="left:1258px;top:234px;width:345px;height:29px;background:#e1e1e1"></div>
<div class="abs" style="left:1258px;top:200px;width:1px;height:122px;background:#a9a9a9"></div>
<div class="abs" style="left:1287px;top:200px;width:1px;height:122px;background:#a9a9a9"></div>
<div class="abs" style="left:1348px;top:200px;width:1px;height:122px;background:#a9a9a9"></div>
<div class="abs" style="left:1389px;top:200px;width:1px;height:122px;background:#a9a9a9"></div>
<div class="abs" style="left:1425px;top:200px;width:1px;height:122px;background:#a9a9a9"></div>
<div class="abs" style="left:1461px;top:200px;width:1px;height:122px;background:#a9a9a9"></div>
<div class="abs" style="left:1508px;top:200px;width:1px;height:122px;background:#a9a9a9"></div>
<div class="abs" style="left:1555px;top:200px;width:1px;height:122px;background:#a9a9a9"></div>
<div class="abs" style="left:1603px;top:200px;width:1px;height:122px;background:#a9a9a9"></div>
<div class="abs" style="left:1258px;top:200px;width:346px;height:1px;background:#a9a9a9"></div>
<div class="abs" style="left:1258px;top:234px;width:346px;height:1px;background:#a9a9a9"></div>
<div class="abs" style="left:1258px;top:263px;width:346px;height:1px;background:#a9a9a9"></div>
<div class="abs" style="left:1258px;top:292px;width:346px;height:1px;background:#a9a9a9"></div>
<div class="abs" style="left:1258px;top:321px;width:346px;height:1px;background:#a9a9a9"></div>
<span class="t" style="left:1292.60px;top:212.00px;font-size:12px;line-height:14px;letter-spacing:0.171px;font-weight:700;color:#2a2a2a;">Member</span>
<span class="t" style="left:1353.70px;top:204.00px;font-size:12px;line-height:14px;font-weight:700;color:#2a2a2a;">N</span>
<span class="t" style="left:1353.70px;top:219.00px;font-size:12px;line-height:14px;letter-spacing:-0.312px;font-weight:700;color:#2a2a2a;">[kN]</span>
<span class="t" style="left:1394.40px;top:204.00px;font-size:12px;line-height:14px;letter-spacing:-0.545px;transform:scaleX(0.9348);font-weight:700;color:#2a2a2a;">Vy</span>
<span class="t" style="left:1394.40px;top:219.00px;font-size:12px;line-height:14px;letter-spacing:-0.279px;font-weight:700;color:#2a2a2a;">[kN]</span>
<span class="t" style="left:1430.50px;top:204.00px;font-size:12px;line-height:14px;letter-spacing:-0.509px;transform:scaleX(0.9633);font-weight:700;color:#2a2a2a;">Vz</span>
<span class="t" style="left:1430.50px;top:219.00px;font-size:12px;line-height:14px;letter-spacing:-0.312px;font-weight:700;color:#2a2a2a;">[kN]</span>
<span class="t" style="left:1466.60px;top:204.00px;font-size:12px;line-height:14px;letter-spacing:-0.096px;font-weight:700;color:#2a2a2a;">Mx</span>
<span class="t" style="left:1466.60px;top:219.00px;font-size:12px;line-height:14px;letter-spacing:-0.051px;font-weight:700;color:#2a2a2a;">[kNm]</span>
<span class="t" style="left:1513.40px;top:204.00px;font-size:12px;line-height:14px;letter-spacing:0.104px;font-weight:700;color:#2a2a2a;">My</span>
<span class="t" style="left:1513.40px;top:219.00px;font-size:12px;line-height:14px;letter-spacing:-0.051px;font-weight:700;color:#2a2a2a;">[kNm]</span>
<span class="t" style="left:1560.30px;top:204.00px;font-size:12px;line-height:14px;letter-spacing:0.204px;font-weight:700;color:#2a2a2a;">Mz</span>
<span class="t" style="left:1560.30px;top:219.00px;font-size:12px;line-height:14px;letter-spacing:-0.051px;font-weight:700;color:#2a2a2a;">[kNm]</span>
<svg class="abs" style="left:1268px;top:243px" width="10" height="13"><path d="M2 1.5 L7.5 6.5 L2 11.5" fill="none" stroke="#222" stroke-width="1.4"/></svg>
<span class="t" style="left:1292.60px;top:243.00px;font-size:12px;line-height:14px;letter-spacing:-0.245px;transform:scaleX(0.9871);color:#2a2a2a;">COL / End</span>
<span class="t" style="left:1353.70px;top:243.00px;font-size:12px;line-height:14px;letter-spacing:-0.257px;transform:scaleX(0.9374);color:#2a2a2a;">-400.0</span>
<span class="t" style="left:1394.40px;top:243.00px;font-size:12px;line-height:14px;letter-spacing:-0.331px;transform:scaleX(0.8993);color:#2a2a2a;">0.0</span>
<span class="t" style="left:1430.50px;top:243.00px;font-size:12px;line-height:14px;letter-spacing:-0.331px;transform:scaleX(0.8993);color:#2a2a2a;">0.0</span>
<span class="t" style="left:1466.60px;top:243.00px;font-size:12px;line-height:14px;letter-spacing:-0.331px;transform:scaleX(0.8993);color:#2a2a2a;">0.0</span>
<span class="t" style="left:1513.40px;top:243.00px;font-size:12px;line-height:14px;letter-spacing:-0.331px;transform:scaleX(0.8993);color:#2a2a2a;">0.0</span>
<span class="t" style="left:1560.30px;top:243.00px;font-size:12px;line-height:14px;letter-spacing:-0.331px;transform:scaleX(0.8993);color:#2a2a2a;">0.0</span>
<span class="t" style="left:1292.60px;top:272.00px;font-size:12px;line-height:14px;letter-spacing:-0.079px;color:#2a2a2a;">M2 / End</span>
<span class="t" style="left:1353.70px;top:272.00px;font-size:12px;line-height:14px;letter-spacing:-0.255px;transform:scaleX(0.9491);color:#2a2a2a;">-50.0</span>
<span class="t" style="left:1394.40px;top:272.00px;font-size:12px;line-height:14px;letter-spacing:-0.331px;transform:scaleX(0.8993);color:#2a2a2a;">0.0</span>
<span class="t" style="left:1430.50px;top:272.00px;font-size:12px;line-height:14px;letter-spacing:-0.331px;transform:scaleX(0.8993);color:#2a2a2a;">0.0</span>
<span class="t" style="left:1466.60px;top:272.00px;font-size:12px;line-height:14px;letter-spacing:-0.331px;transform:scaleX(0.8993);color:#2a2a2a;">0.0</span>
<span class="t" style="left:1513.40px;top:272.00px;font-size:12px;line-height:14px;letter-spacing:-0.331px;transform:scaleX(0.8993);color:#2a2a2a;">0.0</span>
<span class="t" style="left:1560.30px;top:272.00px;font-size:12px;line-height:14px;letter-spacing:-0.331px;transform:scaleX(0.8993);color:#2a2a2a;">0.0</span>
<span class="t" style="left:1292.60px;top:301.00px;font-size:12px;line-height:14px;letter-spacing:-0.079px;color:#2a2a2a;">M3 / End</span>
<span class="t" style="left:1353.70px;top:301.00px;font-size:12px;line-height:14px;letter-spacing:-0.311px;transform:scaleX(0.8880);color:#2a2a2a;">10.0</span>
<span class="t" style="left:1394.40px;top:301.00px;font-size:12px;line-height:14px;letter-spacing:-0.331px;transform:scaleX(0.8993);color:#2a2a2a;">0.0</span>
<span class="t" style="left:1430.50px;top:301.00px;font-size:12px;line-height:14px;letter-spacing:-0.253px;transform:scaleX(0.9563);color:#2a2a2a;">-80.0</span>
<span class="t" style="left:1466.60px;top:301.00px;font-size:12px;line-height:14px;letter-spacing:-0.331px;transform:scaleX(0.8993);color:#2a2a2a;">0.0</span>
<span class="t" style="left:1513.40px;top:301.00px;font-size:12px;line-height:14px;letter-spacing:-0.293px;transform:scaleX(0.9080);color:#2a2a2a;">160.0</span>
<span class="t" style="left:1560.30px;top:301.00px;font-size:12px;line-height:14px;letter-spacing:-0.331px;transform:scaleX(0.8993);color:#2a2a2a;">0.0</span>
<span class="t" style="left:1258.30px;top:346.00px;font-size:12px;line-height:14px;letter-spacing:-0.154px;color:#333;">Values in disabled cells are not taken into account in CBFEM</span>
<span class="t" style="left:1258.30px;top:361.00px;font-size:12px;line-height:14px;letter-spacing:-0.049px;color:#333;">analysis. Members can be loaded only by that components of</span>
<span class="t" style="left:1258.30px;top:376.00px;font-size:12px;line-height:14px;letter-spacing:0.035px;color:#333;">internal forces which are defined in member &quot;Model type&quot;.</span>
<div id="ftr" class="abs" style="background:#141414"></div>
<svg class="abs" style="left:0;top:1047px" width="1920" height="33"><rect width="1920" height="33" filter="url(#bm)"/></svg>
<span class="t" style="left:22.50px;top:1059.00px;font-size:12.5px;line-height:14px;letter-spacing:-0.090px;color:#8a8a8a;">Design code:</span>
<span class="t" style="left:99.00px;top:1059.00px;font-size:12.5px;line-height:14px;letter-spacing:-0.674px;transform:scaleX(0.9002);font-weight:700;color:#fff;">EN</span>
<span class="t" style="left:134.00px;top:1059.00px;font-size:12.5px;line-height:14px;letter-spacing:-0.225px;transform:scaleX(0.9634);color:#8a8a8a;">Analysis:</span>
<span class="t" style="left:185.00px;top:1059.00px;font-size:12.5px;line-height:14px;letter-spacing:-0.225px;transform:scaleX(0.9387);font-weight:700;color:#fff;">Stress, strain</span>
<span class="t" style="left:275.50px;top:1059.00px;font-size:12.5px;line-height:14px;letter-spacing:0.135px;color:#8a8a8a;">Load effects:</span>
<span class="t" style="left:353.00px;top:1059.00px;font-size:12.5px;line-height:14px;letter-spacing:-0.227px;transform:scaleX(0.9692);font-weight:700;color:#fff;">Equilibrium not required</span>
<span class="t" style="left:508.50px;top:1059.00px;font-size:12.5px;line-height:14px;color:#8a8a8a;">Units:</span>
<span class="t" style="left:548.50px;top:1059.00px;font-size:12.5px;line-height:14px;letter-spacing:-0.786px;transform:scaleX(0.9846);font-weight:700;color:#fff;">mm</span>
<span class="t" style="left:1798.49px;top:1059.00px;font-size:12.5px;line-height:14px;letter-spacing:-0.358px;transform:scaleX(0.9892);color:#f37021;">www.</span>
<span class="t" style="left:1827.00px;top:1059.00px;font-size:12.5px;line-height:14px;letter-spacing:-0.031px;color:#fff;">ideastatica</span>
<span class="t" style="left:1886.09px;top:1059.00px;font-size:12.5px;line-height:14px;letter-spacing:-0.329px;transform:scaleX(0.9113);color:#f37021;">.com</span>
</body></html>
